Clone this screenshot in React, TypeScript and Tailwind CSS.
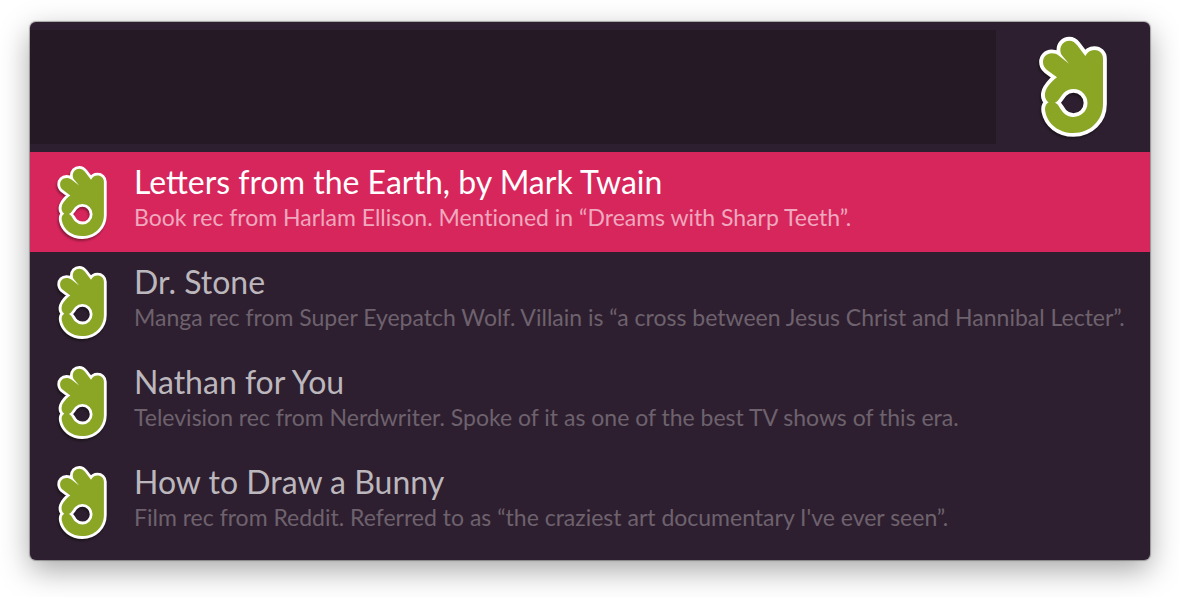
import React, { useState } from 'react';
import clsx from 'clsx';

const results = [
  {
    title: 'Letters from the Earth, by Mark Twain',
    note: 'Book rec from Harlam Ellison. Mentioned in “Dreams with Sharp Teeth”.',
  },
  {
    title: 'Dr. Stone',
    note: 'Manga rec from Super Eyepatch Wolf. Villain is “a cross between Jesus Christ and Hannibal Lecter”.',
  },
  {
    title: 'Nathan for You',
    note: 'Television rec from Nerdwriter. Spoke of it as one of the best TV shows of this era.',
  },
  {
    title: 'How to Draw a Bunny',
    note: "Film rec from Reddit. Referred to as “the craziest art documentary I've ever seen”.",
  },
];

function HandIcon({ className }: { className?: string }) {
  return (
    <svg
      viewBox="57 51 204 300"
      className={clsx('shrink-0 overflow-visible drop-shadow-[-1px_2px_1px_rgba(0,0,0,0.35)]', className)}
      aria-hidden="true"
    >
      {/* stroke is painted first, so only its outer half shows as the white edge */}
      <path
        d="M249 116 C249 100 237 90 223 90 C211 90 202 96 196 108 L171 75 C164 66 157 62 148 62 C132 62 121 75 121 90 C121 98 123 103 128 109 L147 131 L117 107 C110 102 104 100 95 100 C80 100 69 112 69 126 C69 136 73 143 80 149 L111 172 C95 183 81 202 77 212 C72 227 76 240 86 247 C76 253 74 263 76 275 C83 312 117 339 160 339 C211 339 249 301 249 252 Z
           M105 248 C116 244 120 231 131 219 A42 42 0 1 1 131 279 C120 267 116 252 105 248 Z"
        fill="#8aa624"
        fillRule="evenodd"
        stroke="#fff"
        strokeWidth="23"
        strokeLinejoin="round"
        style={{ paintOrder: 'stroke' }}
      />
    </svg>
  );
}

export default function App() {
  const [query, setQuery] = useState('');
  const [selected, setSelected] = useState(0);

  return (
    <main className="bg-white pt-[22px] pr-[29px] pb-[37px] pl-[30px] font-['Lato',sans-serif]">
      <div className="overflow-hidden rounded-md bg-[#2d1f2f] py-2 shadow-[0_0_1px_1px_rgba(0,0,0,0.3),0_10px_30px_rgba(0,0,0,0.35)]">
        {/* Search */}
        <div className="mb-2 flex">
          <input
            type="text"
            aria-label="Search"
            value={query}
            onChange={(e) => setQuery(e.target.value)}
            className="h-[114px] min-w-0 flex-1 bg-[#241925] px-7 text-5xl text-white outline-none"
          />
          <div className="flex w-[154px] shrink-0 items-center justify-center">
            <HandIcon className="h-[100px] w-[68px]" />
          </div>
        </div>

        {/* Results */}
        <ul>
          {results.map((item, i) => (
            <li key={item.title}>
              <button
                type="button"
                onClick={() => setSelected(i)}
                className={clsx(
                  'flex h-[100px] w-full items-center gap-[27px] pl-[27px] text-left',
                  i === selected && 'bg-[#d7265c]'
                )}
              >
                <HandIcon className="h-[73px] w-[50px]" />
                <span className="flex min-w-0 flex-col pb-2 whitespace-nowrap">
                  <span
                    className={clsx(
                      'text-[32px] leading-[38px]',
                      i === selected ? 'text-white' : 'text-[#bcb7bd]'
                    )}
                  >
                    {item.title}
                  </span>
                  <span
                    className={clsx(
                      'text-[23px] leading-8 [font-variant-ligatures:none]',
                      i === selected ? 'text-[#f0a8be]' : 'text-[#6d626e]'
                    )}
                  >
                    {item.note}
                  </span>
                </span>
              </button>
            </li>
          ))}
        </ul>
      </div>
    </main>
  );
}
